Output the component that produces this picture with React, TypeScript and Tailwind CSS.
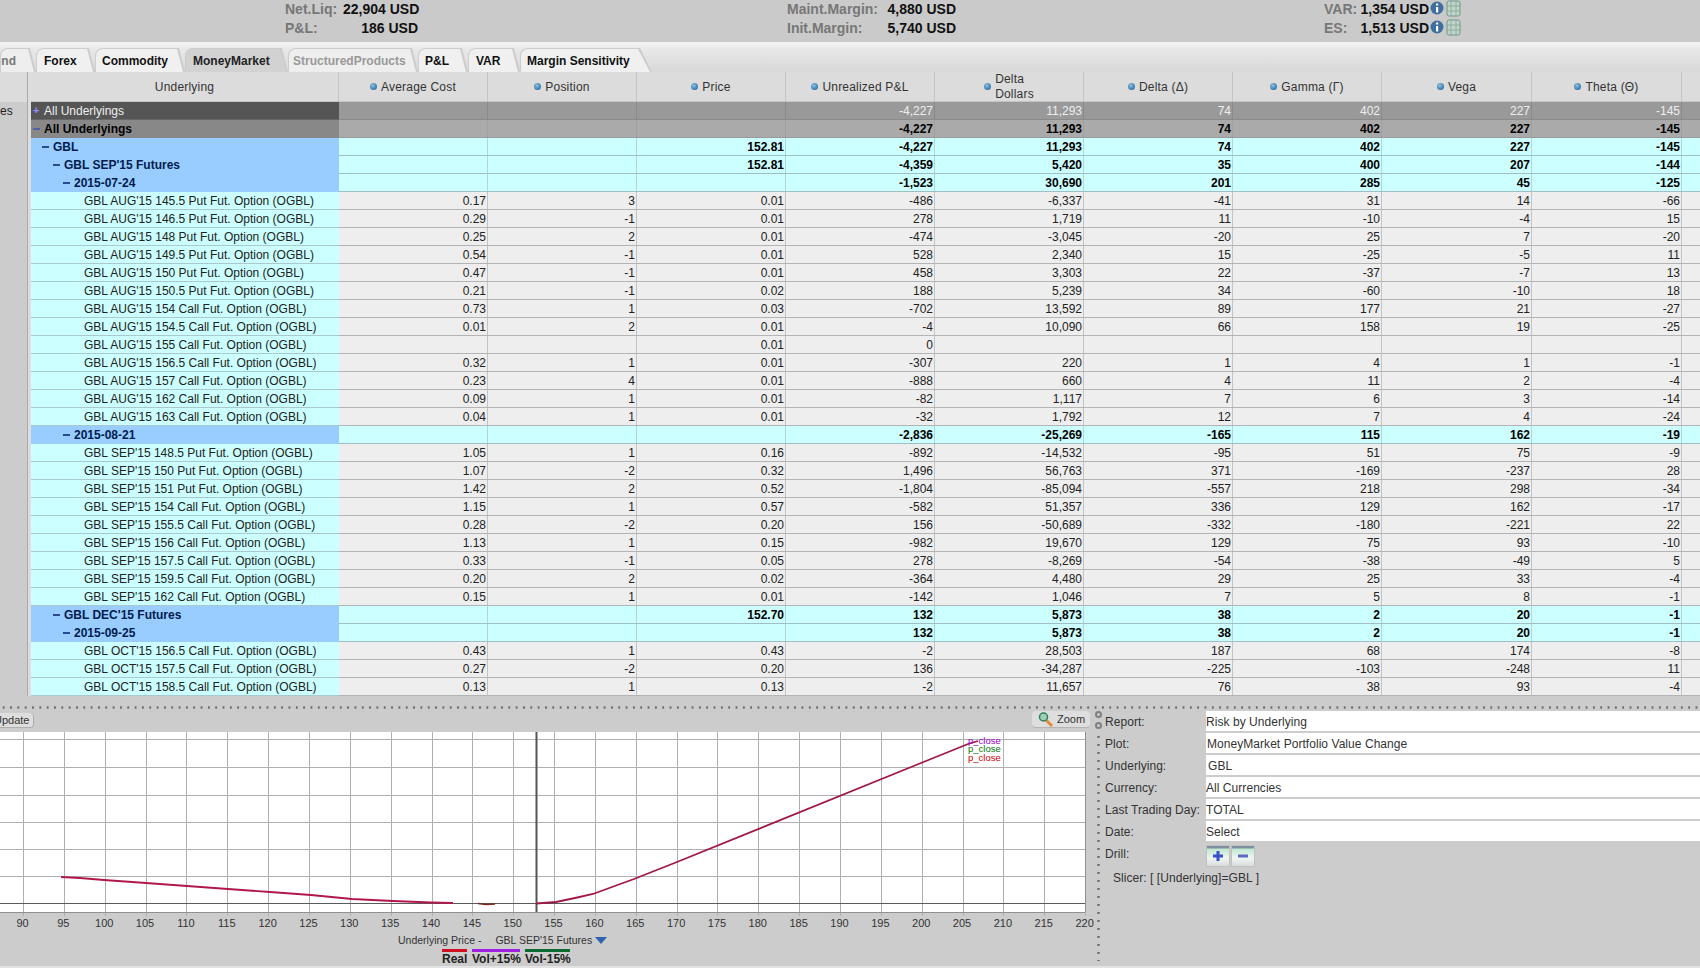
import React from 'react';

const COLS = ['w-[149px]', 'w-[149px]', 'w-[149px]', 'w-[149px]', 'w-[149px]', 'w-[149px]', 'w-[149px]', 'w-[150px]', 'w-[150px]'];

const HEADERS = ['Average Cost', 'Position', 'Price', 'Unrealized P&L', 'Delta Dollars', 'Delta (Δ)', 'Gamma (Γ)', 'Vega', 'Theta (Θ)'];

type Row = { kind: string; name: string; vals: string[] };

const opt = (name: string, ...vals: string[]): Row => ({ kind: 'option', name, vals });
const grp = (kind: string, name: string, price: string, ...vals: string[]): Row => ({ kind, name, vals: ['', '', price, ...vals] });

const ROWS: Row[] = [
  grp('dark', 'All Underlyings', '', '-4,227', '11,293', '74', '402', '227', '-145'),
  grp('total', 'All Underlyings', '', '-4,227', '11,293', '74', '402', '227', '-145'),
  grp('l1', 'GBL', '152.81', '-4,227', '11,293', '74', '402', '227', '-145'),
  grp('l2', "GBL SEP'15 Futures", '152.81', '-4,359', '5,420', '35', '400', '207', '-144'),
  grp('l3', '2015-07-24', '', '-1,523', '30,690', '201', '285', '45', '-125'),
  opt("GBL AUG'15 145.5 Put Fut. Option (OGBL)", '0.17', '3', '0.01', '-486', '-6,337', '-41', '31', '14', '-66'),
  opt("GBL AUG'15 146.5 Put Fut. Option (OGBL)", '0.29', '-1', '0.01', '278', '1,719', '11', '-10', '-4', '15'),
  opt("GBL AUG'15 148 Put Fut. Option (OGBL)", '0.25', '2', '0.01', '-474', '-3,045', '-20', '25', '7', '-20'),
  opt("GBL AUG'15 149.5 Put Fut. Option (OGBL)", '0.54', '-1', '0.01', '528', '2,340', '15', '-25', '-5', '11'),
  opt("GBL AUG'15 150 Put Fut. Option (OGBL)", '0.47', '-1', '0.01', '458', '3,303', '22', '-37', '-7', '13'),
  opt("GBL AUG'15 150.5 Put Fut. Option (OGBL)", '0.21', '-1', '0.02', '188', '5,239', '34', '-60', '-10', '18'),
  opt("GBL AUG'15 154 Call Fut. Option (OGBL)", '0.73', '1', '0.03', '-702', '13,592', '89', '177', '21', '-27'),
  opt("GBL AUG'15 154.5 Call Fut. Option (OGBL)", '0.01', '2', '0.01', '-4', '10,090', '66', '158', '19', '-25'),
  opt("GBL AUG'15 155 Call Fut. Option (OGBL)", '', '', '0.01', '0', '', '', '', '', ''),
  opt("GBL AUG'15 156.5 Call Fut. Option (OGBL)", '0.32', '1', '0.01', '-307', '220', '1', '4', '1', '-1'),
  opt("GBL AUG'15 157 Call Fut. Option (OGBL)", '0.23', '4', '0.01', '-888', '660', '4', '11', '2', '-4'),
  opt("GBL AUG'15 162 Call Fut. Option (OGBL)", '0.09', '1', '0.01', '-82', '1,117', '7', '6', '3', '-14'),
  opt("GBL AUG'15 163 Call Fut. Option (OGBL)", '0.04', '1', '0.01', '-32', '1,792', '12', '7', '4', '-24'),
  grp('l3', '2015-08-21', '', '-2,836', '-25,269', '-165', '115', '162', '-19'),
  opt("GBL SEP'15 148.5 Put Fut. Option (OGBL)", '1.05', '1', '0.16', '-892', '-14,532', '-95', '51', '75', '-9'),
  opt("GBL SEP'15 150 Put Fut. Option (OGBL)", '1.07', '-2', '0.32', '1,496', '56,763', '371', '-169', '-237', '28'),
  opt("GBL SEP'15 151 Put Fut. Option (OGBL)", '1.42', '2', '0.52', '-1,804', '-85,094', '-557', '218', '298', '-34'),
  opt("GBL SEP'15 154 Call Fut. Option (OGBL)", '1.15', '1', '0.57', '-582', '51,357', '336', '129', '162', '-17'),
  opt("GBL SEP'15 155.5 Call Fut. Option (OGBL)", '0.28', '-2', '0.20', '156', '-50,689', '-332', '-180', '-221', '22'),
  opt("GBL SEP'15 156 Call Fut. Option (OGBL)", '1.13', '1', '0.15', '-982', '19,670', '129', '75', '93', '-10'),
  opt("GBL SEP'15 157.5 Call Fut. Option (OGBL)", '0.33', '-1', '0.05', '278', '-8,269', '-54', '-38', '-49', '5'),
  opt("GBL SEP'15 159.5 Call Fut. Option (OGBL)", '0.20', '2', '0.02', '-364', '4,480', '29', '25', '33', '-4'),
  opt("GBL SEP'15 162 Call Fut. Option (OGBL)", '0.15', '1', '0.01', '-142', '1,046', '7', '5', '8', '-1'),
  grp('l2', "GBL DEC'15 Futures", '152.70', '132', '5,873', '38', '2', '20', '-1'),
  grp('l3', '2015-09-25', '', '132', '5,873', '38', '2', '20', '-1'),
  opt("GBL OCT'15 156.5 Call Fut. Option (OGBL)", '0.43', '1', '0.43', '-2', '28,503', '187', '68', '174', '-8'),
  opt("GBL OCT'15 157.5 Call Fut. Option (OGBL)", '0.27', '-2', '0.20', '136', '-34,287', '-225', '-103', '-248', '11'),
  opt("GBL OCT'15 158.5 Call Fut. Option (OGBL)", '0.13', '1', '0.13', '-2', '11,657', '76', '38', '93', '-4'),
];

const STYLES: Record<string, { name: string; vals: string; line: string; indent: string }> = {
  dark: { name: 'bg-[#555555] text-[#eeeeee] border-[#666666]', vals: 'bg-[#999999] text-[#eeeeee] border-[#8a8a8a]', line: 'border-[#8a8a8a]', indent: 'pl-[2px]' },
  total: { name: 'bg-[#888888] text-black font-bold border-[#888888]', vals: 'bg-[#aaaaaa] text-black font-bold border-[#a0a0a0]', line: 'border-[#9a9a9a]', indent: 'pl-[2px]' },
  l1: { name: 'bg-[#99ccff] text-[#001c4d] font-bold border-[#99ccff]', vals: 'bg-[#ccffff] text-black font-bold border-[#b5d5d5]', line: 'border-[#9fbfc5]', indent: 'pl-[11px]' },
  l2: { name: 'bg-[#99ccff] text-[#001c4d] font-bold border-[#99ccff]', vals: 'bg-[#ccffff] text-black font-bold border-[#b5d5d5]', line: 'border-[#9fbfc5]', indent: 'pl-[22px]' },
  l3: { name: 'bg-[#99ccff] text-[#001c4d] font-bold border-[#99ccff]', vals: 'bg-[#ccffff] text-black font-bold border-[#b5d5d5]', line: 'border-[#9fbfc5]', indent: 'pl-[32px]' },
  option: { name: 'bg-[#ccffff] text-[#222222] border-[#a9c9cc]', vals: 'bg-[#eeeeee] text-[#222222] border-[#c4c4c4]', line: 'border-[#b4b4b4]', indent: 'pl-[53px]' },
};

const TAB_OUTER = '[clip-path:polygon(0_0,calc(100%-6px)_0,100%_100%,0_100%)]';
const TAB_INNER = '[clip-path:polygon(0_0,calc(100%-8px)_0,calc(100%-2px)_100%,0_100%)]';

const TABS = [
  { label: 'ond', box: 'w-[36px]', fill: 'bg-[#eeeeee]', text: 'text-[#777777] -ml-[7px]' },
  { label: 'Forex', box: 'w-[59px]', fill: 'bg-[#f0f0f0] pl-[7px]', text: 'text-[#111111]' },
  { label: 'Commodity', box: 'w-[90px]', fill: 'bg-[#f0f0f0] pl-[6px]', text: 'text-[#111111]' },
  { label: 'MoneyMarket', box: 'w-[103px]', fill: 'bg-[#d2d2d2] pl-[7px]', text: 'text-[#222222]' },
  { label: 'StructuredProducts', box: 'w-[130px]', fill: 'bg-[#eeeeee] pl-[4px]', text: 'text-[#999999]' },
  { label: 'P&L', box: 'w-[50px]', fill: 'bg-[#f0f0f0] pl-[6px]', text: 'text-[#111111]' },
  { label: 'VAR', box: 'w-[52px]', fill: 'bg-[#f0f0f0] pl-[7px]', text: 'text-[#111111]' },
  { label: 'Margin Sensitivity', box: 'w-[132px]', fill: 'bg-[#f0f0f0] pl-[6px]', text: 'text-[#111111]', outer: '[clip-path:polygon(0_0,calc(100%-12px)_0,100%_100%,0_100%)]', inner: '[clip-path:polygon(0_0,calc(100%-14px)_0,calc(100%-2px)_100%,0_100%)]' },
];

const FIELDS = [
  ['Report:', 'Risk by Underlying', 'pl-0'],
  ['Plot:', 'MoneyMarket Portfolio Value Change', 'pl-[1px]'],
  ['Underlying:', 'GBL', 'pl-[2px]'],
  ['Currency:', 'All Currencies', 'pl-0'],
  ['Last Trading Day:', 'TOTAL', 'pl-0'],
  ['Date:', 'Select', 'pl-0'],
];

const xOf = (v: number) => 23 + ((v - 90) / 5) * 40.85;
const GRID_Y = [7, 35, 63, 90, 117, 144];

function Bullet() {
  return <span className="inline-block w-[7px] h-[7px] rounded-full bg-[radial-gradient(circle_at_40%_35%,#8fc0e0,#2f72a8_75%)] shrink-0" />;
}

function InfoIcons() {
  return (
    <svg width="32" height="17" viewBox="0 0 32 17" className="shrink-0 ml-[1px]">
      <circle cx="7" cy="8" r="6.5" fill="#3f6f9f" />
      <rect x="6" y="7" width="2.2" height="5.5" fill="#fff" />
      <rect x="6" y="3.5" width="2.2" height="2" fill="#fff" />
      <rect x="17" y="1" width="13" height="15" rx="2" fill="#c4d4cc" stroke="#6f9a85" />
      <path d="M21 1v15M26 1v15M17 6h13M17 11h13" stroke="#7fa892" strokeWidth="0.8" />
    </svg>
  );
}

function Stat({ label, value, labelW, valueW }: { label: string; value: string; labelW: string; valueW: string }) {
  return (
    <div className="flex h-[19px] pb-[2px] items-center text-[14px] font-bold leading-none">
      <span className={`${labelW} text-[#777777]`}>{label}</span>
      <span className={`${valueW} text-right text-[#111111] whitespace-nowrap`}>{value}</span>
    </div>
  );
}

function TreeMark({ kind }: { kind: string }) {
  if (kind === 'option') return null;
  if (kind === 'dark') {
    return <span className="w-[11px] text-[#8f8fff] text-[11px] font-bold leading-none shrink-0">+</span>;
  }
  return (
    <span className="w-[11px] shrink-0 flex items-center">
      <span className={`block w-[7px] h-[2px] ${kind === 'total' ? 'bg-[#5560a8]' : 'bg-[#2a4a90]'}`} />
    </span>
  );
}

function TableRow({ row }: { row: Row }) {
  const s = STYLES[row.kind];
  return (
    <div className={`flex h-[18px] border-b ${s.line} ${s.vals.split(' ')[0]}`}>
      <div className={`w-[308px] shrink-0 flex items-center whitespace-nowrap border-b -mb-[1px] ${s.name} ${s.indent}`}>
        <TreeMark kind={row.kind} />
        <span>{row.name}</span>
      </div>
      {row.vals.map((v, i) => (
        <div key={i} className={`${COLS[i]} shrink-0 text-right pr-[1px] leading-[18px] border-r ${s.vals}`}>
          {v}
        </div>
      ))}
    </div>
  );
}

function Chart() {
  const ticks = Array.from({ length: 27 }, (_, i) => 90 + i * 5);
  return (
    <svg width="1095" height="200" viewBox="0 0 1095 200" className="block">
      <rect x="0" y="0" width="1085" height="180" fill="#ffffff" />
      {GRID_Y.map((y) => (
        <line key={y} x1="0" x2="1085" y1={y + 0.5} y2={y + 0.5} stroke="#b0b0b0" />
      ))}
      {ticks.map((t) => (
        <line key={t} x1={Math.round(xOf(t)) + 0.5} x2={Math.round(xOf(t)) + 0.5} y1="0" y2="184" stroke="#b0b0b0" />
      ))}
      <line x1="0" x2="1085" y1="171.5" y2="171.5" stroke="#5a5a5a" />
      <line x1="0" x2="1085" y1="180.5" y2="180.5" stroke="#909090" />
      <line x1="1085.5" x2="1085.5" y1="0" y2="180" stroke="#909090" />
      <line x1="536.5" x2="536.5" y1="0" y2="180" stroke="#555555" strokeWidth="2" />
      <polyline
        fill="none"
        stroke="#b01848"
        strokeWidth="1.8"
        points="61,145 80,146 104,148 146,151 187,154 228,157 270,160 311,163 352,167 393,169 431,170.5 453,171"
      />
      <polyline fill="none" stroke="#7a2a20" strokeWidth="1.6" points="478,171.5 486,172.5 495,172" />
      <polyline
        fill="none"
        stroke="#a01848"
        strokeWidth="1.8"
        points="536,171.5 556,170 575,166 593,162 612,155 634,147 677,130 921,31 968,12 978,9"
      />
      <text x="968" y="12" fontSize="9.5" fill="#9900cc" fontFamily="'Liberation Sans', sans-serif">p_close</text>
      <text x="968" y="20" fontSize="9.5" fill="#007700" fontFamily="'Liberation Sans', sans-serif">p_close</text>
      <text x="968" y="29" fontSize="9.5" fill="#cc0000" fontFamily="'Liberation Sans', sans-serif">p_close</text>
      {ticks.map((t) => (
        <text key={t} x={xOf(t) - 0.5} y="195" fontSize="11" fill="#333333" textAnchor="middle" fontFamily="'Liberation Sans', sans-serif">
          {t}
        </text>
      ))}
    </svg>
  );
}

function DrillButton({ minus }: { minus?: boolean }) {
  return (
    <div className="w-[24px] h-[22px] border border-[#c0c0c0] bg-[linear-gradient(#7f8f9f_0,#7f8f9f_2px,#c0e8d0_3px,#eef6f2_60%,#d8dcdf_100%)] flex items-center justify-center">
      <svg width="14" height="14" viewBox="0 0 14 14">
        <rect x="2" y="5.5" width="10" height="3" fill={minus ? '#5a6ac0' : '#3a50c8'} />
        {!minus && <rect x="5.5" y="2" width="3" height="10" fill="#3a50c8" />}
      </svg>
    </div>
  );
}

export default function App() {
  return (
    <div className="w-[1700px] h-[968px] overflow-hidden bg-[#cccccc] flex flex-col text-[12px] font-['Liberation_Sans',Arial,sans-serif]">
      {/* Account summary */}
      <div className="h-[42px] shrink-0 flex pl-[285px] pt-0 bg-[#cacaca]">
        <div className="w-[502px]">
          <Stat label="Net.Liq:" value="22,904 USD" labelW="w-[58px]" valueW="w-[75px]" />
          <Stat label="P&L:" value="186 USD" labelW="w-[58px]" valueW="w-[75px]" />
        </div>
        <div className="w-[537px]">
          <Stat label="Maint.Margin:" value="4,880 USD" labelW="w-[97px]" valueW="w-[72px]" />
          <Stat label="Init.Margin:" value="5,740 USD" labelW="w-[97px]" valueW="w-[72px]" />
        </div>
        <div className="flex flex-col">
          <div className="flex items-start"><Stat label="VAR:" value="1,354 USD" labelW="w-[36px]" valueW="w-[69px]" /><InfoIcons /></div>
          <div className="flex items-start"><Stat label="ES:" value="1,513 USD" labelW="w-[36px]" valueW="w-[69px]" /><InfoIcons /></div>
        </div>
      </div>

      {/* Tabs */}
      <div className="h-[30px] shrink-0 flex items-end bg-[linear-gradient(#f4f4f4_0,#e8e8e8_25%,#d8d8d8_100%)]">
        {TABS.map((t) => (
          <div
            key={t.label}
            className={`h-[24px] shrink-0 pt-[1px] pl-[1px] rounded-tl-[8px] bg-[#cdcdcd] ${t.outer ?? TAB_OUTER} ${t.box}`}
          >
            <div className={`h-[23px] overflow-hidden rounded-tl-[7px] font-bold leading-[24px] whitespace-nowrap ${t.inner ?? TAB_INNER} ${t.fill}`}>
              <div className={t.text}>{t.label}</div>
            </div>
          </div>
        ))}
      </div>

      {/* Risk table */}
      <div className="flex shrink-0">
        <div className="w-[28px] shrink-0 border-r border-[#aaaaaa]">
          <div className="h-[30px] bg-[#dcdcdc]" />
          <div className="h-[18px] leading-[18px] text-[#222222]">es</div>
        </div>
        <div className="w-[3px] shrink-0 bg-[#dddddd]" />
        <div className="flex-1 min-w-0">
          <div className="flex h-[30px] bg-[#dcdcdc] border-b border-[#c4c4c4] text-[#333333] tracking-[0.2px]">
            <div className="w-[308px] shrink-0 flex items-center justify-center border-r border-[#c4c4c4]">Underlying</div>
            {HEADERS.map((h, i) => (
              <div key={h} className={`${COLS[i]} shrink-0 flex items-center justify-center gap-[4px] border-r border-[#c4c4c4]`}>
                <Bullet />
                {h === 'Delta Dollars' ? (
                  <span className="leading-[15px] pt-[1px]">Delta<br />Dollars</span>
                ) : (
                  <span>{h}</span>
                )}
              </div>
            ))}
          </div>
          {ROWS.map((r, i) => (
            <TableRow key={i} row={r} />
          ))}
        </div>
      </div>

      <div className="h-[10px] shrink-0" />
      <div className="h-[3px] shrink-0 bg-[radial-gradient(circle,#707070_1px,transparent_1.4px)] bg-[length:7.33px_3px]" />
      <div className="h-[1px] shrink-0" />

      {/* Scenario plot and report controls */}
      <div className="flex flex-1 min-h-0">
        <div className="w-[1095px] shrink-0">
          <div className="h-[22px] flex items-center justify-between pr-[5px]">
            <div className="w-[34px] h-[15px] mt-[-2px] rounded-r-[4px] bg-[#dedede] border-r border-b border-[#b0b0b0] overflow-hidden text-[11px] leading-[14px] text-[#333333] whitespace-nowrap">
              <span className="-ml-[6px] inline-block">Update</span>
            </div>
            <div className="w-[58px] h-[17px] mt-[-3px] rounded-[4px] bg-[#dedede] border-b border-[#b4b4b4] flex items-center pl-[6px] gap-[3px] text-[11px] text-[#333333]">
              <svg width="16" height="15" viewBox="0 0 16 15">
                <line x1="7" y1="7" x2="14" y2="14" stroke="#e08a3c" strokeWidth="3" />
                <circle cx="5.5" cy="5" r="4" fill="#9fd0b4" stroke="#2f7f5f" strokeWidth="1.5" />
              </svg>
              Zoom
            </div>
          </div>
          <Chart />
          <div className="flex items-center pl-[398px] h-[17px] text-[10.5px] text-[#333333] whitespace-nowrap">
            <span>Underlying Price -</span>
            <span className="ml-[14px]">GBL SEP'15 Futures</span>
            <svg width="12" height="7" viewBox="0 0 12 7" className="ml-[3px]"><path d="M0 0h12L6 7z" fill="#2f62b0" /></svg>
          </div>
          <div className="flex pl-[442px] gap-[5px] text-[12px] font-bold leading-[14px] text-[#222222] whitespace-nowrap">
            <div className="w-[25px]"><div className="h-[3px] bg-[#d01020]" />Real</div>
            <div className="w-[48px]"><div className="h-[3px] bg-[#a020e0]" />Vol+15%</div>
            <div className="w-[45px]"><div className="h-[3px] bg-[#0a6a30]" />Vol-15%</div>
          </div>
        </div>

        <div className="w-[10px] shrink-0 flex flex-col items-start pl-0 pt-[1px]">
          <div className="w-[7px] h-[7px] rounded-full border-2 border-[#808080] mb-[4px]" />
          <div className="w-[7px] h-[7px] rounded-full border-2 border-[#808080] mb-[4px]" />
          <div className="w-[7px] h-[228px] bg-[radial-gradient(circle,#707070_1px,transparent_1.5px)] bg-[length:7px_8px]" />
        </div>

        <div className="flex-1 min-w-0 pt-[1px] text-[#333333] tracking-[0.05px]">
          {FIELDS.map(([label, value, pad]) => (
            <div key={label} className="flex h-[22px]">
              <div className="w-[101px] shrink-0 whitespace-nowrap leading-[22px]">{label}</div>
              <div className={`flex-1 h-[20px] bg-white leading-[22px] ${pad}`}>{value}</div>
            </div>
          ))}
          <div className="flex h-[26px]">
            <div className="w-[101px] shrink-0 leading-[22px]">Drill:</div>
            <div className="flex gap-[1px] pt-[2px]">
              <DrillButton />
              <DrillButton minus />
            </div>
          </div>
          <div className="pl-[8px] leading-[18px]">Slicer: [ [Underlying]=GBL ]</div>
        </div>
      </div>

      <div className="h-[2px] shrink-0 bg-[#e4e4e4]" />
    </div>
  );
}
